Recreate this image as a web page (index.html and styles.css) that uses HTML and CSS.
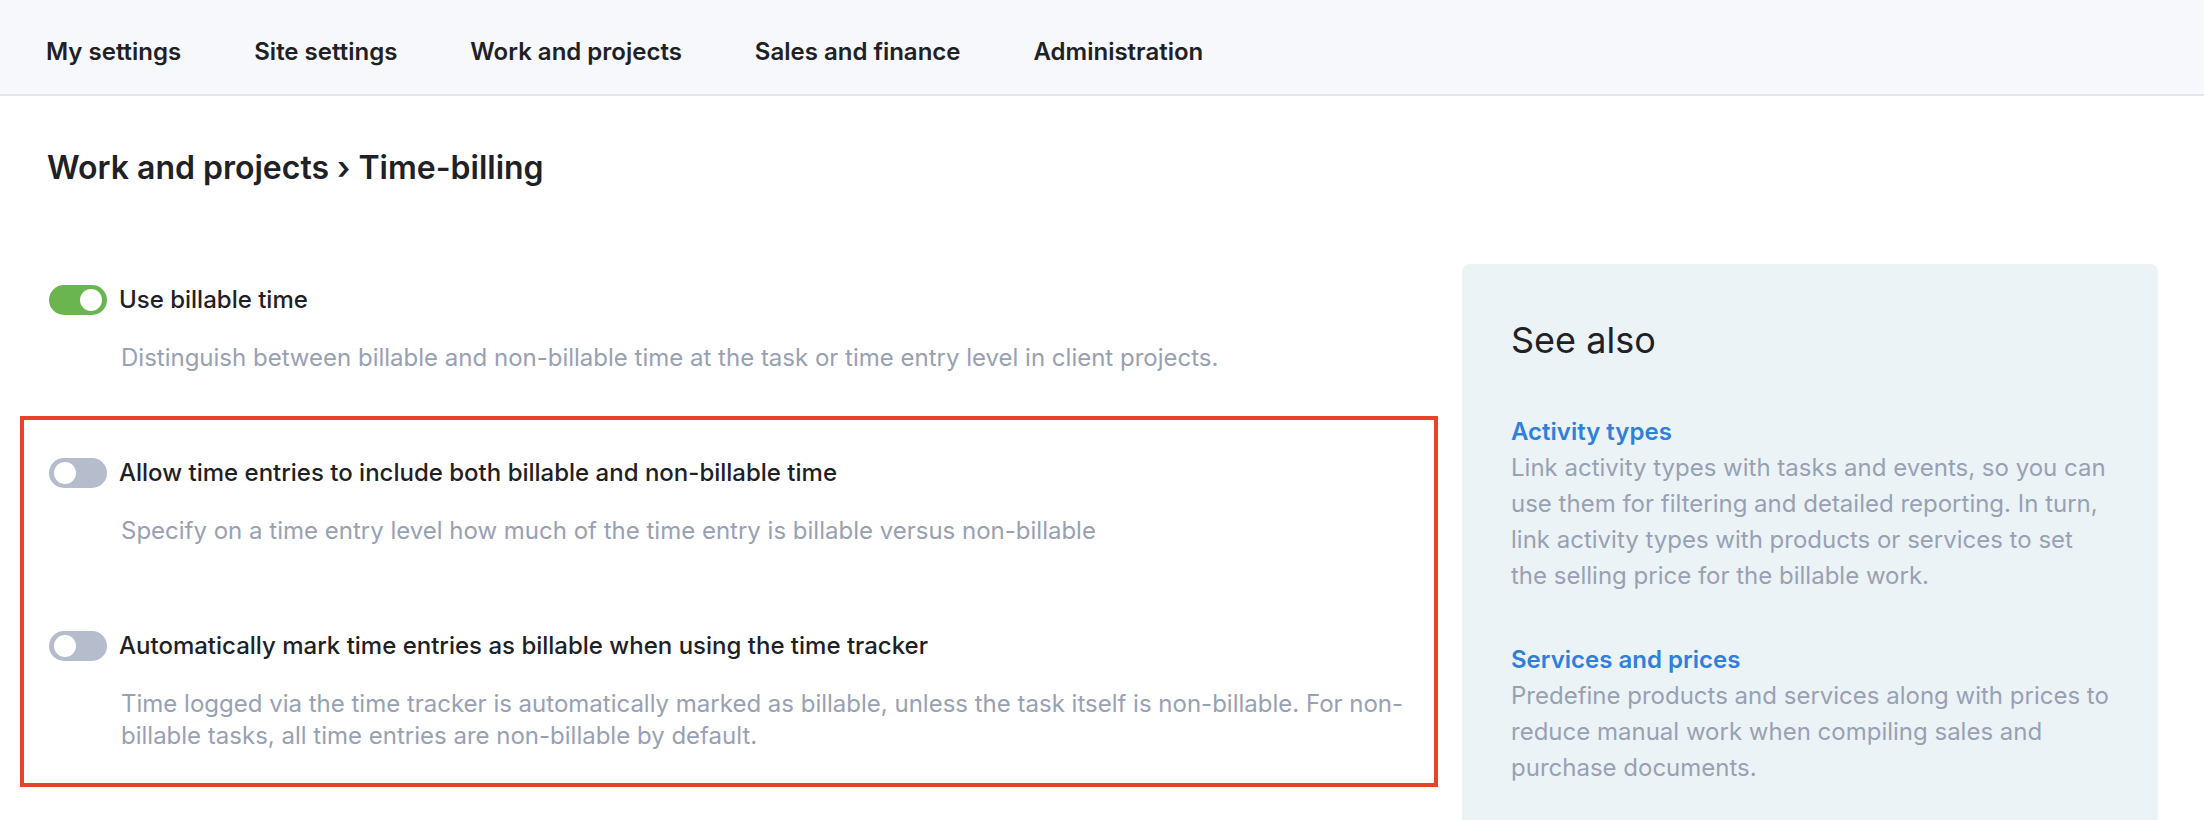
FILE: index.html
```html
<!DOCTYPE html>
<html>
<head>
    <title>Settings - Time-billing</title>
    <link rel="stylesheet" href="styles.css">
</head>
<body>
    <nav class="topnav">
        <a href="#">My settings</a>
        <a href="#">Site settings</a>
        <a href="#">Work and projects</a>
        <a href="#">Sales and finance</a>
        <a href="#">Administration</a>
    </nav>

    <main class="page">
        <h1 class="page-title">Work and projects › Time-billing</h1>

        <div class="layout">
            <div class="settings">
                <div class="setting">
                    <div class="setting-row">
                        <span class="toggle on"></span>
                        <span class="setting-label">Use billable time</span>
                    </div>
                    <p class="setting-desc">Distinguish between billable and non-billable time at the task or time entry level in client projects.</p>
                </div>

                <div class="highlight">
                    <div class="setting">
                        <div class="setting-row">
                            <span class="toggle"></span>
                            <span class="setting-label">Allow time entries to include both billable and non-billable time</span>
                        </div>
                        <p class="setting-desc">Specify on a time entry level how much of the time entry is billable versus non-billable</p>
                    </div>

                    <div class="setting">
                        <div class="setting-row">
                            <span class="toggle"></span>
                            <span class="setting-label">Automatically mark time entries as billable when using the time tracker</span>
                        </div>
                        <p class="setting-desc">Time logged via the time tracker is automatically marked as billable, unless the task itself is non-billable. For non-billable tasks, all time entries are non-billable by default.</p>
                    </div>
                </div>
            </div>

            <aside class="see-also">
                <h2>See also</h2>
                <div class="see-item">
                    <a href="#">Activity types</a>
                    <p>Link activity types with tasks and events, so you can use them for filtering and detailed reporting. In turn, link activity types with products or services to set the selling price for the billable work.</p>
                </div>
                <div class="see-item">
                    <a href="#">Services and prices</a>
                    <p>Predefine products and services along with prices to reduce manual work when compiling sales and purchase documents.</p>
                </div>
            </aside>
        </div>
    </main>
</body>
</html>
```

FILE: styles.css
```css
* {
    margin: 0;
    padding: 0;
    box-sizing: border-box;
    font-family: Inter, "Noto Sans", Arial, sans-serif;
}

body {
    background: #fff;
    color: #1e2126;
}

/* top tabs */
.topnav {
    display: flex;
    gap: 73px;
    height: 96px;
    padding: 37px 0 0 46px;
    background-color: #f7f8fb;
    border-bottom: 2px solid #e4e5ec;
}

.topnav a {
    font-size: 24px;
    font-weight: 600;
    line-height: 30px;
    color: #1e2126;
    text-decoration: none;
}

.page {
    padding: 0 46px 0 47px;
}

.page-title {
    font-size: 32px;
    font-weight: 600;
    line-height: 40px;
    margin-top: 52px;
}

.layout {
    display: grid;
    grid-template-columns: 1fr 696px;
    gap: 52px;
    margin-top: 76px;
    align-items: start;
}

/* settings list */
.settings {
    padding-top: 20px;
}

.setting + .setting {
    margin-top: 83px;
}

.setting-row {
    display: flex;
    align-items: center;
    gap: 12px;
    height: 32px;
}

.setting-label {
    font-size: 24px;
    font-weight: 500;
    line-height: 32px;
}

.setting-desc {
    margin-top: 26px;
    padding-left: 74px;
    font-size: 24px;
    line-height: 32px;
    color: #98a1b3;
}

.toggle {
    position: relative;
    flex: none;
    width: 58px;
    height: 30px;
    margin-left: 2px;
    border-radius: 15px;
    background-color: #b5bccb;
}

.toggle::after {
    content: "";
    position: absolute;
    top: 4px;
    left: 5px;
    width: 22px;
    height: 22px;
    border-radius: 50%;
    background: #fff;
}

.toggle.on {
    background-color: #6ab550;
}

.toggle.on::after {
    left: auto;
    right: 5px;
}

.highlight {
    margin: 42px -28px 0 -27px;
    padding: 37px 24px 31px 23px;
    border: 4px solid #e6432a;
}

/* side panel */
.see-also {
    background-color: #ecf3f7;
    border-radius: 8px;
    padding: 54px 48px 60px 49px;
}

.see-also h2 {
    font-size: 36px;
    font-weight: 400;
    line-height: 44px;
    color: #1e2126;
}

.see-item {
    margin-top: 52px;
}

.see-item + .see-item {
    margin-top: 48px;
}

.see-item a {
    display: block;
    font-size: 24px;
    font-weight: 600;
    line-height: 36px;
    color: #2f7fdc;
    text-decoration: none;
}

.see-item p {
    font-size: 24px;
    line-height: 36px;
    color: #98a1b3;
}
```
